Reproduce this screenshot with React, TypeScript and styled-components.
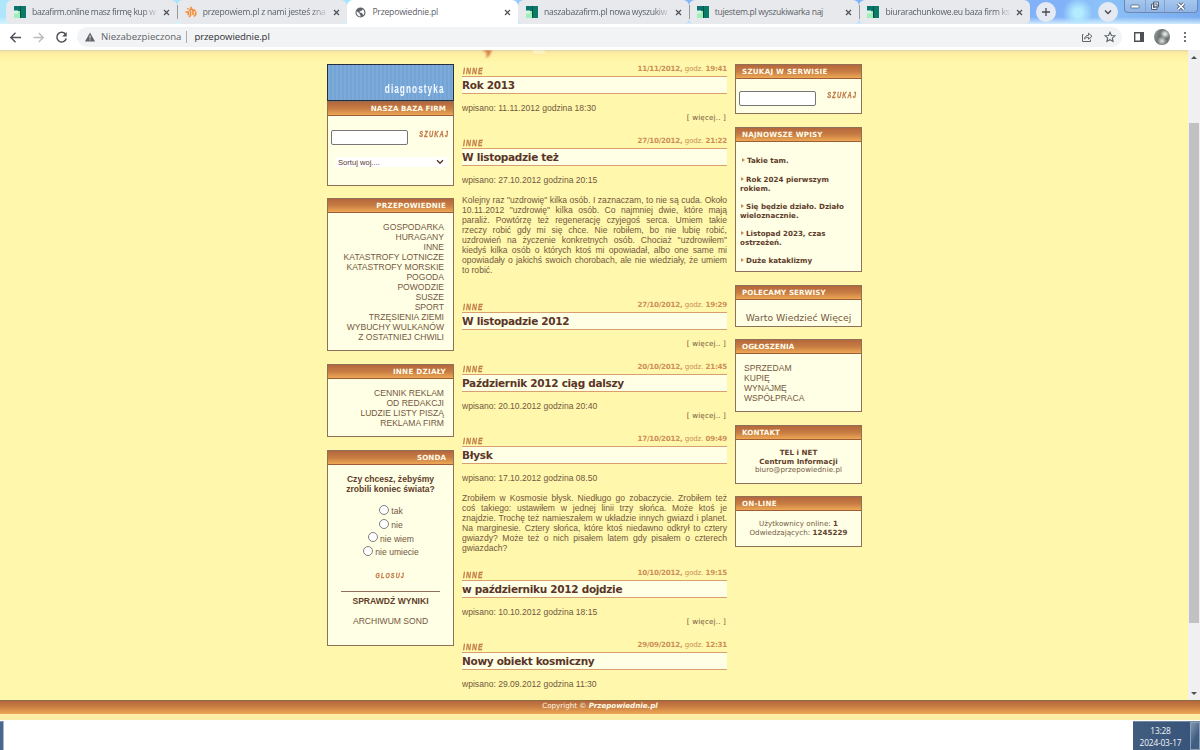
import React from 'react';
import styled, { createGlobalStyle } from 'styled-components';

const GlobalStyle = createGlobalStyle`
  * {
    box-sizing: border-box;
  }

  body {
    margin: 0;
    overflow: hidden;
    background: #ffffff;
    font-family: 'Liberation Sans', Arial, sans-serif;
  }
`;

const Screen = styled.div`
  width: 1200px;
  height: 750px;
  display: flex;
  flex-direction: column;
  overflow: hidden;
`;

/* browser */

const TabStrip = styled.div`
  height: 24px;
  display: flex;
  flex-shrink: 0;
  padding-left: 6px;
  background:
    radial-gradient(circle at 1078px 13px, #b4ecff 4px, rgba(150, 215, 255, 0) 15px),
    linear-gradient(to bottom, rgba(255, 255, 255, 0) 17px, rgba(225, 245, 255, 0.85) 24px),
    linear-gradient(to right, #aee6fc, #a5e3fd 400px, #85b9f5 620px, #81b1f8 1060px, #8cc2f8 1100px, #78aaf0);
`;

const TabItem = styled.div<{ $active?: boolean }>`
  width: 170.7px;
  height: 24px;
  display: flex;
  align-items: center;
  padding: 0 7px 0 8px;
  border-radius: 6px 6px ${(props) => (props.$active ? '0 0' : '5px 5px')};
  background: ${(props) => (props.$active ? '#ffffff' : '#e7e9ed')};
`;

const TabTitle = styled.span<{ $fade?: boolean; $spacing?: number }>`
  flex: 1;
  min-width: 0;
  margin-left: 6px;
  white-space: nowrap;
  font: 8.6px/14px 'Open Sans', 'Noto Sans', sans-serif;
  letter-spacing: ${(props) => props.$spacing || 0}px;
  color: #5c6066;
  ${(props) => props.$fade && 'mask-image: linear-gradient(to right, #000 88%, rgba(0, 0, 0, 0.15));'}
`;

const TabClose = styled.svg`
  width: 7px;
  height: 7px;
  margin-left: 6px;
`;

const TabDivider = styled.i`
  width: 1px;
  height: 14px;
  margin: 5px -1px 0 0;
  background: #96999e;
  z-index: 1;
`;

const RoundButton = styled.div`
  width: 20px;
  height: 20px;
  margin: 2px 0 0 6px;
  display: flex;
  align-items: center;
  justify-content: center;
  border-radius: 50%;
  background: #e4e9f2;

  & + & {
    margin-left: 42px;
  }
`;

const WindowButtons = styled.div`
  display: flex;
  height: 13px;
  margin-left: 6px;
  border: 1px solid #7088ae;
  border-top: 0;
  border-radius: 0 0 4px 4px;
  background: linear-gradient(#a6c8ef, #8fb4e6);
`;

const WindowButton = styled.div<{ $width: number }>`
  width: ${(props) => props.$width}px;
  display: flex;
  align-items: center;
  justify-content: center;

  & + & {
    border-left: 1px solid #86a2cc;
  }
`;

const Toolbar = styled.div`
  height: 26px;
  flex-shrink: 0;
  display: flex;
  align-items: center;
  padding-left: 9px;
  background: #ffffff;
`;

const NavIcon = styled.svg`
  width: 13px;
  height: 13px;
  margin-right: 10px;
`;

const AddressBar = styled.div`
  width: 1045px;
  height: 20px;
  margin-left: -1px;
  padding: 0 6px 0 8px;
  display: flex;
  align-items: center;
  border-radius: 10px;
  background: #f1f3f4;
  font: 9.6px/20px 'Open Sans', 'Noto Sans', sans-serif;
  color: #5f6368;
`;

const Insecure = styled.span`
  margin-left: 6px;
  padding-right: 5px;
  line-height: 12px;
  border-right: 1px solid #a7aaae;
`;

const Address = styled.span`
  flex: 1;
  margin-left: 7px;
  letter-spacing: -0.1px;
  color: #303236;
`;

const BarIcon = styled.svg`
  width: 12px;
  height: 12px;
  margin-left: 11px;
`;

const Avatar = styled.div`
  width: 16px;
  height: 16px;
  margin: 0 -2px 0 9px;
  border-radius: 50%;
  background:
    radial-gradient(circle at 11px 5px, #dfe2e2 1px, transparent 5px),
    radial-gradient(circle at 8px 12px, #d0d2cf 1px, transparent 5px),
    linear-gradient(110deg, #98a19f, #4f5654 60%, #8c9394);
`;

/* page */

const Viewport = styled.div`
  height: 650px;
  flex-shrink: 0;
  display: flex;
`;

const Page = styled.main`
  flex: 1;
  display: flex;
  gap: 8px;
  height: 650px;
  padding-left: 327px;
  overflow: hidden;
  background: linear-gradient(#dcd3ae 0, #fbe9a0 2px, #fff1a4 6px, #fff7ab 13px);
`;

const LeftColumn = styled.aside`
  width: 127px;
  padding-top: 14px;
`;

const MiddleColumn = styled.section`
  position: relative;
  width: 265px;
  padding-top: 12px;
`;

const RightColumn = styled.aside`
  width: 127px;
  padding-top: 14px;
`;

const LogoRemnant = styled.svg`
  position: absolute;
  top: 0;
  left: 14px;
  width: 80px;
  height: 12px;
`;

const Scrollbar = styled.div`
  width: 12px;
  height: 650px;
  display: flex;
  flex-direction: column;
  align-items: center;
  background: #f0f0f0;
`;

const ScrollArrow = styled.i<{ $down?: boolean }>`
  width: 0;
  margin: ${(props) => (props.$down ? 'auto 0 5px' : '6px 0 0')};
  border: 3px solid transparent;
  ${(props) => (props.$down ? 'border-top-color: #505050; border-bottom: 0;' : 'border-bottom-color: #505050; border-top: 0;')}
`;

const ScrollThumb = styled.div`
  width: 10px;
  height: 500px;
  margin-top: 64px;
  background: #c1c1c1;
`;

const Banner = styled.div`
  height: 37px;
  padding: 15px 9px 0 0;
  border: 1px solid #26303c;
  background: repeating-linear-gradient(to right, #7cabdb 0 2px, #74a4d4 2px 4px);
  line-height: 16px;
  text-align: right;
`;

const BannerText = styled.span`
  display: inline-block;
  transform: scaleX(0.66);
  transform-origin: right;
  font: bold 12.5px/16px 'Liberation Sans', Arial, sans-serif;
  letter-spacing: 1.6px;
  margin-right: -1px;
  color: #f4f9ff;
`;

const Panel = styled.section<{ $height: number; $gap?: number }>`
  height: ${(props) => props.$height}px;
  margin-bottom: ${(props) => props.$gap ?? 13}px;
  border: 1px solid #91705a;
  background: #ffffe6;
  overflow: hidden;
`;

const PanelHeader = styled.h2<{ $right?: boolean; $spacing?: number }>`
  height: 14px;
  margin: 0;
  padding: 1px ${(props) => (props.$right ? 7 : 6)}px 0 6px;
  border-bottom: 1px solid #9a5d34;
  background: linear-gradient(#b5673d, #c67c42 50%, #eea855);
  font: bold 7.14px/12px Verdana, 'DejaVu Sans', sans-serif;
  letter-spacing: ${(props) => props.$spacing ?? 0.08}px;
  text-align: ${(props) => (props.$right ? 'right' : 'left')};
  color: #fffbe8;
`;

const SearchRow = styled.div<{ $top: number }>`
  display: flex;
  align-items: flex-start;
  justify-content: space-between;
  padding: ${(props) => props.$top}px 0 0 3px;
`;

const SearchInput = styled.input`
  width: 77px;
  height: 15px;
  flex-shrink: 0;
  padding: 0 2px;
  border: 1px solid #767676;
  border-radius: 2px;
  background: #ffffff;
`;

const ImageText = styled.span<{ $size?: number }>`
  display: inline-block;
  font: italic bold ${(props) => props.$size || 8.4}px/9px 'Liberation Sans', Arial, sans-serif;
  letter-spacing: 1.6px;
  color: #c07a48;
  -webkit-text-stroke: 0.3px #c07a48;
  transform: scaleX(0.69);
`;

const SearchButton = styled(ImageText)`
  margin: 0 4px 0 -12px;
  transform-origin: right;
`;

const SortSelect = styled.div`
  height: 10px;
  margin: 12px 6px 0 7px;
  padding: 0 3px;
  display: flex;
  align-items: center;
  justify-content: space-between;
  background: #ffffff;
  font-size: 7.6px;
  color: #5c3a2c;
`;

const LinkList = styled.ul<{ $right?: boolean }>`
  margin: 0;
  padding: ${(props) => (props.$right ? '9px 9px 0 0' : '9px 0 0 8px')};
  list-style: none;
  font-size: 8.57px;
  line-height: 10px;
  text-align: ${(props) => (props.$right ? 'right' : 'left')};
  color: #735840;
`;

const Poll = styled.div`
  padding-top: 9px;
  display: flex;
  flex-direction: column;
  align-items: center;
  font-size: 8.57px;
  line-height: 10px;
  text-align: center;
  color: #735840;

  b {
    color: #603d2a;
  }
`;

const PollOptions = styled.div`
  margin: 9px 0 13px;
`;

const PollOption = styled.label`
  height: 13.7px;
  display: flex;
  justify-content: center;
  align-items: center;
  gap: 2px;
  padding-left: 1px;

  span {
    padding-top: 3px;
  }
`;

const Radio = styled.i`
  width: 10px;
  height: 10px;
  border: 1px solid #808080;
  border-radius: 50%;
  background: #ffffff;
`;

const PollLine = styled.hr`
  width: 99px;
  height: 1px;
  margin: 11px 0 4px;
  border: 0;
  background: #91705a;
`;

const Article = styled.article<{ $height: number }>`
  height: ${(props) => props.$height}px;
`;

const ArticleTop = styled.header`
  height: 14px;
  display: flex;
  justify-content: space-between;
`;

const Category = styled(ImageText)`
  margin: 4px 0 0 1px;
  transform-origin: left;
`;

const PostDate = styled.span`
  margin-top: 1px;
  font: bold 7.14px/11px Verdana, 'DejaVu Sans', sans-serif;
  letter-spacing: -0.22px;
  color: #cc8f57;

  span {
    font-weight: normal;
  }
`;

const ArticleTitle = styled.h1`
  height: 18px;
  margin: 0;
  border: solid #d8a06c;
  border-width: 1px 0;
  background: #ffffe6;
  font: bold 10.5px/16px Verdana, 'DejaVu Sans', sans-serif;
  letter-spacing: -0.3px;
  color: #5b3526;
  white-space: nowrap;
`;

const ArticleBody = styled.div`
  padding-top: 9px;
  font-size: 8.57px;
  line-height: 10px;
  color: #735840;
`;

const Paragraph = styled.p`
  margin: 10px 0 0;
`;

const Line = styled.span<{ $last?: boolean }>`
  display: block;
  white-space: nowrap;
  text-align-last: ${(props) => (props.$last ? 'left' : 'justify')};
`;

const More = styled.div`
  padding-right: 1px;
  font: 7.14px/10px Verdana, 'DejaVu Sans', sans-serif;
  letter-spacing: 0.18px;
  text-align: right;
`;

const NewsList = styled.ul`
  margin: 0;
  padding: 14px 4px 0;
  list-style: none;
  font: bold 7.14px/9px Verdana, 'DejaVu Sans', sans-serif;
  color: #603d2a;
`;

const NewsItem = styled.li`
  margin-bottom: 9px;
  white-space: pre-line;

  &:first-child {
    margin-bottom: 9.5px;
    padding-left: 1px;
  }

  &::before {
    content: '';
    display: inline-block;
    margin: 0 2px 1px 1px;
    border: 2px solid transparent;
    border-left: 3px solid #c98850;
    border-right: 0;
  }
`;

const Recommended = styled.div`
  padding-top: 12px;
  font: 9.3px/12px Verdana, 'DejaVu Sans', sans-serif;
  text-align: center;
  color: #735840;
`;

const SmallCenter = styled.div`
  padding-top: 9px;
  font: 7.14px/8.6px Verdana, 'DejaVu Sans', sans-serif;
  letter-spacing: 0.04px;
  text-align: center;
  color: #735840;

  b {
    color: #603d2a;
  }
`;

const Footer = styled.footer`
  height: 20px;
  flex-shrink: 0;
  border-top: 1px solid #8b6d45;
  border-bottom: 6px solid #fdeea5;
  background: linear-gradient(#b5673d, #c67c42 40%, #eea855);
  font: 7.14px/10px Verdana, 'DejaVu Sans', sans-serif;
  text-align: center;
  color: #fffbe8;
`;

const Taskbar = styled.div`
  flex: 1;
  display: flex;
  justify-content: space-between;
  padding-top: 1px;
  background: #ffffff;
`;

const TaskbarEdge = styled.div`
  width: 4px;
  background: #4a678d;
  border-right: 1px solid #a9b7c9;
  border-top: 1px solid #8798ad;
`;

const Clock = styled.div`
  width: 67px;
  display: flex;
  border-top: 1px solid #76889d;
  background: linear-gradient(to right, #415c7e, #37537a);
  color: #f3f6fa;
  font: 8.3px/12px 'Open Sans', 'Noto Sans', sans-serif;
  letter-spacing: -0.15px;
  text-align: center;
`;

const ClockText = styled.div`
  width: 55px;
  padding-top: 3px;
`;

const ShowDesktop = styled.div`
  width: 10px;
  margin-left: auto;
  border: 1px solid #8b9eb6;
  background: linear-gradient(120deg, #8196b0, #405d82 60%);
`;

const SiteIcon: React.FC<{ kind: string }> = ({ kind }) => {
  if (kind === 'globe') {
    return (
      <svg width="11" height="11" viewBox="0 0 24 24" fill="#5f6368">
        <path d="M12 1a11 11 0 1 0 0 22 11 11 0 0 0 0-22zM4 9l6 5v2l2 2v3A9 9 0 0 1 4 9zm14 9c0-1-1-2-2-2v-3l-6-1v-2h2V8h3l2-3a9 9 0 0 1 1 13z" />
      </svg>
    );
  }
  if (kind === 'orange') {
    return (
      <svg width="12" height="12" viewBox="0 0 12 12" fill="none" stroke="#f68b32" strokeWidth="1.6">
        <path d="M2.500 3.200l1-1M6 0.800v2.400M0.500 6h2.700v3.200M5.500 5v4.500l-1.500 1.500M8 3.500v5.500M10.700 5.500V8.500l-1.700 2M4 4.500l2.500-1.300 4 1.600" />
      </svg>
    );
  }
  return (
    <svg width="12" height="12" viewBox="0 0 12 12">
      <path d="M0 0h12v12H0z" fill="#0a7b67" />
      <path d="M0 0h6v5H0z" fill="#07766e" />
      <path d="M0 5h7v7H0z" fill="#a1efb8" />
      <path d="M0 4.500h4v3H0z" fill="#d5f5e4" />
      <path d="M6 0h1v12H6z" fill="#064e44" />
    </svg>
  );
};

const TabCloseIcon = () => (
  <TabClose viewBox="0 0 7 7" stroke="#4b4f54" strokeWidth="1.2">
    <path d="M1 1l5 5M6 1l-5 5" />
  </TabClose>
);

const tabs = [
  { title: 'bazafirm.online masz firmę kup w', icon: 'green', fade: true, spacing: -0.37 },
  { title: 'przepowiem.pl z nami jesteś zna', icon: 'orange', fade: true, divider: true, spacing: -0.22 },
  { title: 'Przepowiednie.pl', icon: 'globe', active: true, spacing: -0.2 },
  { title: 'naszabazafirm.pl nowa wyszukiw', icon: 'green', fade: true, spacing: -0.3 },
  { title: 'tujestem.pl wyszukiwarka naj', icon: 'green', divider: true, spacing: -0.31 },
  { title: 'biurarachunkowe.eu baza firm ks', icon: 'green', fade: true, divider: true, spacing: -0.3 },
];

const articles = [
  { date: '11/11/2012', time: '19:41', title: 'Rok 2013', added: '11.11.2012 godzina 18:30', more: true, height: 72 },
  {
    date: '27/10/2012',
    time: '21:22',
    title: 'W listopadzie też',
    added: '27.10.2012 godzina 20:15',
    height: 164,
    lines: [
      'Kolejny raz "uzdrowię" kilka osób. I zaznaczam, to nie są cuda. Około',
      '10.11.2012 "uzdrowię" kilka osób. Co najmniej dwie, które mają',
      'paraliż. Powtórzę też regenerację czyjegoś serca. Umiem takie',
      'rzeczy robić gdy mi się chce. Nie robiłem, bo nie lubię robić,',
      'uzdrowień na życzenie konkretnych osób. Chociaż "uzdrowiłem"',
      'kiedyś kilka osób o których ktoś mi opowiadał, albo one same mi',
      'opowiadały o jakichś swoich chorobach, ale nie wiedziały, że umiem',
      'to robić.',
    ],
  },
  { date: '27/10/2012', time: '19:29', title: 'W listopadzie 2012', more: true, height: 62 },
  { date: '20/10/2012', time: '21:45', title: 'Październik 2012 ciąg dalszy', added: '20.10.2012 godzina 20:40', more: true, height: 72 },
  {
    date: '17/10/2012',
    time: '09:49',
    title: 'Błysk',
    added: '17.10.2012 godzina 08.50',
    height: 134,
    lines: [
      'Zrobiłem w Kosmosie błysk. Niedługo go zobaczycie. Zrobiłem też',
      'coś takiego: ustawiłem w jednej linii trzy słońca. Może ktoś je',
      'znajdzie. Trochę też namieszałem w układzie innych gwiazd i planet.',
      'Na marginesie. Cztery słońca, które ktoś niedawno odkrył to cztery',
      'gwiazdy? Może też o nich pisałem latem gdy pisałem o czterech',
      'gwiazdach?',
    ],
  },
  { date: '10/10/2012', time: '19:15', title: 'w październiku 2012 dojdzie', added: '10.10.2012 godzina 18:15', more: true, height: 72 },
  { date: '29/09/2012', time: '12:31', title: 'Nowy obiekt kosmiczny', added: '29.09.2012 godzina 11:30', height: 72 },
];

const categories = [
  'GOSPODARKA',
  'HURAGANY',
  'INNE',
  'KATASTROFY LOTNICZE',
  'KATASTROFY MORSKIE',
  'POGODA',
  'POWODZIE',
  'SUSZE',
  'SPORT',
  'TRZĘSIENIA ZIEMI',
  'WYBUCHY WULKANÓW',
  'Z OSTATNIEJ CHWILI',
];

const sections = ['CENNIK REKLAM', 'OD REDAKCJI', 'LUDZIE LISTY PISZĄ', 'REKLAMA FIRM'];

const news = [
  'Takie tam.',
  'Rok 2024 pierwszym\nrokiem.',
  'Się będzie działo. Działo\nwieloznacznie.',
  'Listopad 2023, czas\nostrzeżeń.',
  'Duże kataklizmy',
];

const Browser: React.FC = () => (
  <>
    <TabStrip>
      {tabs.map((tab) => (
        <React.Fragment key={tab.title}>
          {tab.divider && <TabDivider />}
          <TabItem $active={tab.active}>
            <SiteIcon kind={tab.icon} />
            <TabTitle $fade={tab.fade} $spacing={tab.spacing}>
              {tab.title}
            </TabTitle>
            <TabCloseIcon />
          </TabItem>
        </React.Fragment>
      ))}
      <RoundButton>
        <svg width="10" height="10" viewBox="0 0 10 10" stroke="#45494e" strokeWidth="1.3">
          <path d="M5 1v8M1 5h8" />
        </svg>
      </RoundButton>
      <RoundButton>
        <svg width="8" height="8" viewBox="0 0 8 8" fill="none" stroke="#45494e" strokeWidth="1.3">
          <path d="M1 2.500l3 3 3-3" />
        </svg>
      </RoundButton>
      <WindowButtons>
        <WindowButton $width={20}>
          <svg width="10" height="5" viewBox="0 0 10 5" fill="#fff" stroke="#53627a" strokeWidth="0.8">
            <rect x="1" y="1" width="8" height="3" rx="0.5" />
          </svg>
        </WindowButton>
        <WindowButton $width={19}>
          <svg width="10" height="10" viewBox="0 0 10 10" fill="#e8effa" stroke="#53627a">
            <path d="M3.500 1h5v5h-5zM1.500 3h5.500v5.500H1.500zM3.500 5h1.500v1.500H3.500z" />
          </svg>
        </WindowButton>
        <WindowButton $width={33}>
          <svg width="10" height="9" viewBox="0 0 10 9">
            <path d="M2 1.500l6 6M8 1.500l-6 6" stroke="#53627a" strokeWidth="3.2" />
            <path d="M2 1.500l6 6M8 1.500l-6 6" stroke="#fff" strokeWidth="1.6" />
          </svg>
        </WindowButton>
      </WindowButtons>
    </TabStrip>
    <Toolbar>
      <NavIcon viewBox="0 0 13 13" fill="none" stroke="#4d5156" strokeWidth="1.4">
        <path d="M12 6.500H2M6.500 1.800L1.800 6.500l4.700 4.700" />
      </NavIcon>
      <NavIcon viewBox="0 0 13 13" fill="none" stroke="#b9bbbe" strokeWidth="1.3">
        <path d="M1.500 6.500H11M6.800 2l4.500 4.500L6.800 11" />
      </NavIcon>
      <NavIcon viewBox="0 0 13 13" fill="none" stroke="#4d5156" strokeWidth="1.5">
        <path d="M10.700 3.500A4.800 4.800 0 1 0 11.300 7.500" />
        <path d="M11.700 1v4.500H7.200z" fill="#4d5156" stroke="none" />
      </NavIcon>
      <AddressBar>
        <svg width="10" height="10" viewBox="0 0 10 10">
          <path d="M5 0.500L10 9.500H0z" fill="#5f6368" />
          <path d="M5 3.500v3M5 7.300v1.100" stroke="#f1f3f4" />
        </svg>
        <Insecure>Niezabezpieczona</Insecure>
        <Address>przepowiednie.pl</Address>
        <BarIcon viewBox="0 0 12 12" fill="none" stroke="#5f6368">
          <path d="M2.500 3.500H1.500v7h8V8.500M3.500 8c.3-2.300 1.800-3.600 4-3.700V2.200L11 5.300 7.500 8.200V6.300C5.700 6.300 4.500 7 3.500 8z" />
        </BarIcon>
        <BarIcon viewBox="0 0 12 12" fill="none" stroke="#5f6368" strokeWidth="1.1">
          <path d="M6 1.300l1.400 3.200 3.500.3-2.600 2.300.8 3.400L6 8.700l-3.100 1.800.8-3.400L1.100 4.800l3.500-.3z" />
        </BarIcon>
      </AddressBar>
      <BarIcon viewBox="0 0 12 12">
        <path d="M1.700 1.700h8.600v8.600H1.700z" fill="none" stroke="#4d5156" strokeWidth="1.4" />
        <path d="M7 1.500h3.500v9H7z" fill="#4d5156" />
      </BarIcon>
      <Avatar />
      <BarIcon viewBox="0 0 12 12" fill="#4d5156">
        <circle cx="6" cy="2" r="1.1" />
        <circle cx="6" cy="6" r="1.1" />
        <circle cx="6" cy="10" r="1.1" />
      </BarIcon>
    </Toolbar>
  </>
);

const App: React.FC = () => {
  return (
    <Screen>
      <GlobalStyle />
      <Browser />

      <Viewport>
        <Page>
          <LeftColumn>
            <Banner>
              <BannerText>diagnostyka</BannerText>
            </Banner>
            <Panel $height={85} $gap={12}>
              <PanelHeader $right>NASZA BAZA FIRM</PanelHeader>
              <SearchRow $top={14}>
                <SearchInput />
                <SearchButton>SZUKAJ</SearchButton>
              </SearchRow>
              <SortSelect>
                Sortuj woj....
                <svg width="8" height="6" viewBox="0 0 8 6" fill="none" stroke="#5c3a2c" strokeWidth="1.5">
                  <path d="M1 1.200l3 3 3-3" />
                </svg>
              </SortSelect>
            </Panel>
            <Panel $height={153}>
              <PanelHeader $right $spacing={0.22}>
                PRZEPOWIEDNIE
              </PanelHeader>
              <LinkList $right>
                {categories.map((name) => (
                  <li key={name}>{name}</li>
                ))}
              </LinkList>
            </Panel>
            <Panel $height={73}>
              <PanelHeader $right $spacing={0.3}>
                INNE DZIAŁY
              </PanelHeader>
              <LinkList $right>
                {sections.map((name) => (
                  <li key={name}>{name}</li>
                ))}
              </LinkList>
            </Panel>
            <Panel $height={196}>
              <PanelHeader $right>SONDA</PanelHeader>
              <Poll>
                <b>
                  Czy chcesz, żebyśmy
                  <br />
                  zrobili koniec świata?
                </b>
                <PollOptions>
                  {['tak', 'nie', 'nie wiem', 'nie umiecie'].map((option) => (
                    <PollOption key={option}>
                      <Radio />
                      <span>{option}</span>
                    </PollOption>
                  ))}
                </PollOptions>
                <ImageText $size={8}>GLOSUJ</ImageText>
                <PollLine />
                <b>SPRAWDŹ WYNIKI</b>
                <Paragraph>ARCHIWUM SOND</Paragraph>
              </Poll>
            </Panel>
          </LeftColumn>

          <MiddleColumn>
            <LogoRemnant viewBox="0 0 80 12">
              <defs>
                <filter id="soft">
                  <feGaussianBlur stdDeviation="1" />
                </filter>
              </defs>
              <path d="M6 0h10l-3 6-3 2 1-5z" fill="#d57b42" filter="url(#soft)" />
              <path d="M57 1h12v2H57z" fill="#fffbe0" filter="url(#soft)" />
            </LogoRemnant>
            {articles.map((article) => (
              <Article key={article.title} $height={article.height}>
                <ArticleTop>
                  <Category $size={9.8}>INNE</Category>
                  <PostDate>
                    {article.date}, <span>godz.</span> {article.time}
                  </PostDate>
                </ArticleTop>
                <ArticleTitle>{article.title}</ArticleTitle>
                <ArticleBody>
                  {article.added && <div>wpisano: {article.added}</div>}
                  {article.lines && (
                    <Paragraph>
                      {article.lines.map((line, i) => (
                        <Line key={line} $last={i === article.lines.length - 1}>
                          {line}
                        </Line>
                      ))}
                    </Paragraph>
                  )}
                  {article.more && <More>[ więcej.. ]</More>}
                </ArticleBody>
              </Article>
            ))}
          </MiddleColumn>

          <RightColumn>
            <Panel $height={50}>
              <PanelHeader $spacing={0.26}>SZUKAJ W SERWISIE</PanelHeader>
              <SearchRow $top={12}>
                <SearchInput />
                <SearchButton>SZUKAJ</SearchButton>
              </SearchRow>
            </Panel>
            <Panel $height={145}>
              <PanelHeader $spacing={0.2}>NAJNOWSZE WPISY</PanelHeader>
              <NewsList>
                {news.map((item) => (
                  <NewsItem key={item}>{item}</NewsItem>
                ))}
              </NewsList>
            </Panel>
            <Panel $height={42} $gap={12}>
              <PanelHeader>POLECAMY SERWISY</PanelHeader>
              <Recommended>Warto Wiedzieć Więcej</Recommended>
            </Panel>
            <Panel $height={73}>
              <PanelHeader>OGŁOSZENIA</PanelHeader>
              <LinkList>
                <li>SPRZEDAM</li>
                <li>KUPIĘ</li>
                <li>WYNAJMĘ</li>
                <li>WSPÓŁPRACA</li>
              </LinkList>
            </Panel>
            <Panel $height={59} $gap={12}>
              <PanelHeader>KONTAKT</PanelHeader>
              <SmallCenter>
                <b>TEL i NET</b>
                <br />
                <b>Centrum Informacji</b>
                <br />
                biuro@przepowiednie.pl
              </SmallCenter>
            </Panel>
            <Panel $height={51}>
              <PanelHeader $spacing={0.25}>ON-LINE</PanelHeader>
              <SmallCenter>
                Użytkownicy online: <b>1</b>
                <br />
                Odwiedzających: <b>1245229</b>
              </SmallCenter>
            </Panel>
          </RightColumn>
        </Page>
        <Scrollbar>
          <ScrollArrow />
          <ScrollThumb />
          <ScrollArrow $down />
        </Scrollbar>
      </Viewport>

      <Footer>
        Copyright © <b><i>Przepowiednie.pl</i></b>
      </Footer>
      <Taskbar>
        <TaskbarEdge />
        <Clock>
          <ClockText>
            13:28
            <br />
            2024-03-17
          </ClockText>
          <ShowDesktop />
        </Clock>
      </Taskbar>
    </Screen>
  );
};

export default App;
